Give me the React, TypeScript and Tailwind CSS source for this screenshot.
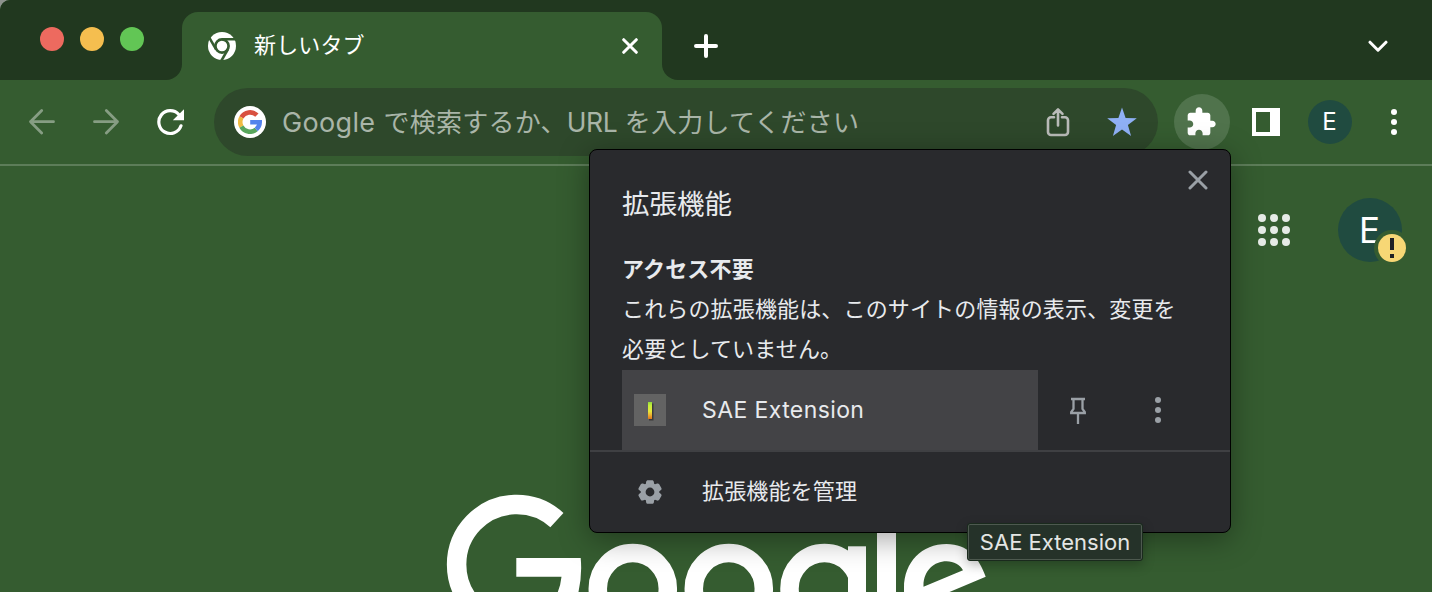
import React from 'react';

const FONT = "font-['Inter','Noto_Sans_CJK_JP',sans-serif]";

function ChromeMark() {
  return (
    <svg className="h-7 w-7 shrink-0" viewBox="0 0 28 28">
      <circle cx="14" cy="14" r="14" fill="#fff" />
      <circle cx="14" cy="14" r="6.6" fill="none" stroke="#355c30" strokeWidth="2.7" />
      <g stroke="#355c30" strokeWidth="2.6">
        <path d="M14 7.2H28" />
        <path d="M14 7.2H28" transform="rotate(120 14 14)" />
        <path d="M14 7.2H28" transform="rotate(240 14 14)" />
      </g>
    </svg>
  );
}

function GoogleMark() {
  return (
    <span className="flex h-8 w-8 shrink-0 items-center justify-center rounded-full bg-white">
      <svg className="h-6 w-6" viewBox="0 0 24 24" fill="none" strokeWidth="4.6">
        <path d="M18.9 5.2A9.8 9.8 0 0 0 3.4 7.4" stroke="#d95140" />
        <path d="M3.4 7.4a9.8 9.8 0 0 0 0 9.2" stroke="#f0bb42" />
        <path d="M3.4 16.6A9.8 9.8 0 0 0 18.2 19.5" stroke="#58a55c" />
        <path d="M12.2 12.2H21.7A9.8 9.8 0 0 1 18.2 19.5" stroke="#5383ec" />
      </svg>
    </span>
  );
}

function Dots({ className }: { className: string }) {
  return (
    <svg className={className} viewBox="0 0 6 26" fill="currentColor">
      <circle cx="3" cy="3" r="3" />
      <circle cx="3" cy="13" r="3" />
      <circle cx="3" cy="23" r="3" />
    </svg>
  );
}

function TabStrip() {
  return (
    <div className="flex h-20 bg-[#21381f]">
      <div className="w-[166px] pt-[27px] pl-10">
        <div className="flex gap-4">
          <span className="h-6 w-6 rounded-full bg-[#ed6a5f]" />
          <span className="h-6 w-6 rounded-full bg-[#f5be4f]" />
          <span className="h-6 w-6 rounded-full bg-[#62c655]" />
        </div>
      </div>
      <div className="flex flex-1 bg-[linear-gradient(#355c30,#355c30)] bg-[length:512px_16px] bg-[position:0_100%] bg-no-repeat">
        <div className="w-4 rounded-br-2xl bg-[#21381f]" />
        <div className="mt-3 flex h-[68px] w-[480px] items-center rounded-t-2xl bg-[#355c30] pl-[26px]">
          <ChromeMark />
          <span className="mb-0.5 ml-[18px] flex-1 text-[22px] leading-8 tracking-[0.15px] text-white">新しいタブ</span>
          <svg className="mr-6 h-4 w-4" viewBox="0 0 16 16" stroke="#fff" strokeWidth="3" strokeLinecap="round">
            <path d="M1.7 1.7 14.3 14.3M14.3 1.7 1.7 14.3" />
          </svg>
        </div>
        <div className="flex flex-1 items-start justify-between rounded-bl-2xl bg-[#21381f] pt-[34px] pr-[44px] pl-8">
          <svg className="h-6 w-6" viewBox="0 0 24 24" stroke="#fff" strokeWidth="4" strokeLinecap="round">
            <path d="M12 2v20M2 12h20" />
          </svg>
          <svg className="mt-[6px] h-3 w-5" viewBox="0 0 20 12" fill="none" stroke="#fff" strokeWidth="3" strokeLinecap="round" strokeLinejoin="round">
            <path d="M2 2.2 10 10.2 18 2.2" />
          </svg>
        </div>
      </div>
    </div>
  );
}

function Toolbar() {
  return (
    <div className="flex h-[86px] items-start border-b-2 border-[#5d7d59] bg-[#355c30]">
      <div className="flex h-[84px] w-[214px] items-center pl-7">
        <svg className="h-7 w-7" viewBox="0 0 28 28" fill="none" stroke="#869d83" strokeWidth="2.8" strokeLinecap="round" strokeLinejoin="round">
          <path d="M25.5 13.7H2.5M13.7 2.5 2.5 13.7 13.7 25" />
        </svg>
        <svg className="ml-9 h-7 w-7" viewBox="0 0 28 28" fill="none" stroke="#869d83" strokeWidth="2.8" strokeLinecap="round" strokeLinejoin="round">
          <path d="M2.5 13.7h23M14.3 2.5 25.5 13.7 14.3 25" />
        </svg>
        <svg className="ml-9 h-7 w-7" viewBox="0 0 28 28" fill="none">
          <path d="M25 17.8A11.4 11.4 0 1 1 22.8 6.5" stroke="#fff" strokeWidth="3.2" strokeLinecap="round" />
          <path d="M28 1.2V12.3H16.8z" fill="#fff" />
        </svg>
      </div>
      <div className="mt-2 flex h-[68px] w-[944px] items-center rounded-full bg-[#2e482b] pl-5">
        <GoogleMark />
        <div className="mt-px ml-4 flex-1 text-[26px] leading-9 tracking-[0.25px] whitespace-pre text-[#a9b5a8]">
          <span className="text-[27px] tracking-[0.35px]">Google </span>で検索するか、
          <span className="text-[26.5px] tracking-[-0.3px]">URL </span>を入力してください
        </div>
        <svg className="h-[30px] w-6" viewBox="0 0 24 30" fill="none" stroke="#b9bbb8" strokeWidth="2.6" strokeLinecap="round" strokeLinejoin="round">
          <path d="M8 10.3H5a3 3 0 0 0-3 3V25a3 3 0 0 0 3 3h14a3 3 0 0 0 3-3V13.3a3 3 0 0 0-3-3h-3M12 18.5V2.5M7.5 6.8 12 2.3l4.5 4.5" />
        </svg>
        <svg className="mr-[21px] ml-[37px] h-[30px] w-[30px]" viewBox="0 0 30 30" fill="#8fb0f5">
          <path d="M15 .5l3.6 10.6 11.2.2-8.9 6.8 3.2 10.8L15 22.5l-9.1 6.4 3.2-10.8L.2 11.3l11.2-.2z" />
        </svg>
      </div>
      <span className="mt-[14px] ml-4 flex h-14 w-14 items-center justify-center rounded-full bg-[#50734c]">
        <svg className="mr-0.5 h-8 w-8" viewBox="0 0 24 24" fill="#fff">
          <path d="M20.5 11H19V7c0-1.1-.9-2-2-2h-4V3.5C13 2.12 11.88 1 10.5 1S8 2.12 8 3.5V5H4c-1.1 0-1.99.9-1.99 2v3.8H3.5c1.49 0 2.7 1.21 2.7 2.7s-1.21 2.7-2.7 2.7H2V20c0 1.1.9 2 2 2h3.8v-1.5c0-1.49 1.21-2.7 2.7-2.7s2.7 1.21 2.7 2.7V22H17c1.1 0 2-.9 2-2v-4h1.5c1.38 0 2.5-1.12 2.5-2.5S21.88 11 20.5 11z" />
        </svg>
      </span>
      <span className="mt-7 ml-[22px] h-7 w-7 border-y-4 border-r-[10px] border-l-4 border-white" />
      <span className="mt-5 ml-7 flex h-11 w-11 items-center justify-center rounded-full bg-[#204b40] pr-px text-[24px] text-white">E</span>
      <Dots className="mt-[29px] ml-[39px] h-[26px] w-1.5 text-white" />
    </div>
  );
}

function GoogleLogo() {
  return (
    <svg className="absolute top-[324px] left-[440px] h-[102px] w-[560px]" viewBox="440 490 560 102" fill="#fff">
      <path d="M556.9 520.1A60 60 0 1 0 556.9 609" fill="none" stroke="#fff" strokeWidth="19.5" />
      <path d="M516.3 558H580.7Q582.5 577 577.5 596H556Q560.5 587 561.5 576.7H516.3Z" />
      <g fill="none" stroke="#fff" strokeWidth="18.5">
        <ellipse cx="632.8" cy="588.5" rx="35" ry="35.5" />
        <ellipse cx="728.8" cy="588.5" rx="35" ry="35.5" />
        <ellipse cx="824.5" cy="588.5" rx="35" ry="35.5" />
      </g>
      <rect x="848" y="546.3" width="18" height="50" />
      <rect x="866" y="540" width="11" height="56" fill="#355c30" />
      <rect x="877" y="490" width="19" height="110" />
      <path
        fillRule="evenodd"
        d="M904 596V588C904 562 922 544 946.5 544C968 544 979 558 985.7 576.7L940 596ZM923.5 586.7C923 571 934 561.3 946.5 561.3C954 561.3 960 565 963 570.3Z"
      />
    </svg>
  );
}

function NewTabPage() {
  return (
    <div className="relative flex flex-1 justify-end gap-12 overflow-hidden bg-[#355c30] pt-8 pr-[30px]">
      <GoogleLogo />
      <div className="mt-4 grid h-8 w-8 grid-cols-3 gap-1">
        {Array.from({ length: 9 }, (_, i) => (
          <span key={i} className="h-2 w-2 rounded-full bg-[#e6ebe6]" />
        ))}
      </div>
      <div className="relative flex h-16 w-16 items-center justify-center rounded-full bg-[#204b40]">
        <span className="mt-px mr-px text-[35px] leading-none text-white">E</span>
        <span className="absolute top-8 left-9 flex h-9 w-9 items-center justify-center rounded-full bg-[#355c30]">
          <svg className="h-7 w-7" viewBox="0 0 28 28">
            <circle cx="14" cy="14" r="14" fill="#f7d775" />
            <path d="M12 4h4v12h-4zM12 20h4v4h-4z" fill="#202124" />
          </svg>
        </span>
      </div>
    </div>
  );
}

function ExtensionsPopup() {
  return (
    <div className="absolute top-[149px] left-[589px] flex h-[384px] w-[642px] flex-col rounded-lg border border-black bg-[#292a2d] text-[22px] text-[#e8eaed] shadow-[0_6px_30px_rgba(0,0,0,0.36)]">
      <div className="flex h-[94px] justify-between pl-8">
        <h1 className="mt-[34px] text-[27.5px] leading-10 font-normal">拡張機能</h1>
        <svg className="mt-5 mr-[22px] h-5 w-5" viewBox="0 0 20 20" stroke="#9aa0a6" strokeWidth="3" strokeLinecap="round">
          <path d="M2 2 18 18M18 2 2 18" />
        </svg>
      </div>
      <div className="mt-[5px] mb-px h-[120px] pl-8 leading-10 tracking-[0.15px]">
        <h2 className="font-bold">アクセス不要</h2>
        <p className="w-[580px]">これらの拡張機能は、このサイトの情報の表示、変更を<br />必要としていません。</p>
      </div>
      <div className="flex h-20 items-center pl-8">
        <div className="flex h-20 w-[416px] items-center bg-[#434346] pl-3">
          <svg className="h-8 w-8" viewBox="0 0 32 32">
            <defs>
              <linearGradient id="bar" x1="0" y1="0" x2="0" y2="1">
                <stop offset="0" stopColor="#8fdb3a" />
                <stop offset="0.2" stopColor="#c4ee3c" />
                <stop offset="0.55" stopColor="#e6e83c" />
                <stop offset="0.75" stopColor="#efb52f" />
                <stop offset="1" stopColor="#d9731f" />
              </linearGradient>
            </defs>
            <path d="M0 0h32v32H0z" fill="#636363" />
            <path d="M15 9.5h4.5v17H15z" fill="#3a3a3a" />
            <path d="M14 8h4v17h-4z" fill="url(#bar)" />
          </svg>
          <span className="ml-9 text-[23px] tracking-[0.4px]">SAE Extension</span>
        </div>
        <svg className="ml-8 h-7 w-4" viewBox="0 0 16 28" fill="none" stroke="#9aa0a6" strokeWidth="2.3">
          <path d="M1 3H15M3.5 3V13L1.2 16.2V17H14.8V16.2L12.5 13V3M8 17V28" />
        </svg>
        <Dots className="ml-[69px] h-[26px] w-1.5 text-[#9aa0a6]" />
      </div>
      <div className="flex flex-1 items-center border-t-2 border-[#3f4043] pl-[44px]">
        <svg className="h-8 w-8" viewBox="0 0 24 24" fill="#9aa0a6">
          <path
            fillRule="evenodd"
            d="M13.85 22.25h-3.7c-.74 0-1.36-.54-1.45-1.27l-.27-1.89c-.27-.14-.53-.29-.79-.46l-1.8.72c-.7.26-1.47-.03-1.81-.65L2.2 15.53c-.35-.66-.2-1.44.36-1.88l1.53-1.19c-.01-.15-.02-.3-.02-.46 0-.15.01-.31.02-.46l-1.52-1.19c-.59-.45-.74-1.26-.37-1.88l1.85-3.19c.34-.62 1.11-.9 1.79-.63l1.81.73c.26-.17.52-.32.78-.46l.27-1.91c.09-.7.71-1.25 1.44-1.25h3.7c.74 0 1.36.54 1.45 1.27l.27 1.89c.27.14.53.29.79.46l1.8-.72c.71-.26 1.48.03 1.82.65l1.84 3.18c.36.66.2 1.44-.36 1.88l-1.52 1.19c.01.15.02.3.02.46s-.01.31-.02.46l1.52 1.19c.56.45.72 1.23.37 1.86l-1.86 3.22c-.34.62-1.11.9-1.8.63l-1.8-.72c-.26.17-.52.32-.78.46l-.27 1.91c-.1.68-.72 1.22-1.46 1.22zM12 8.2a3.8 3.8 0 1 0 0 7.6a3.8 3.8 0 1 0 0-7.6z"
            transform="translate(1.6 1.6) scale(.867)"
          />
        </svg>
        <span className="mb-0.5 ml-9 tracking-[0.15px]">拡張機能を管理</span>
      </div>
    </div>
  );
}

export default function App() {
  return (
    <div className="h-[592px] w-[1432px] bg-[#8d928d]">
      <div className={`${FONT} relative flex h-full flex-col overflow-hidden rounded-tl-[10px] bg-[#355c30]`}>
        <TabStrip />
        <Toolbar />
        <NewTabPage />
        <ExtensionsPopup />
        <div className="absolute top-[523px] left-[967px] flex h-[38px] w-[176px] items-center justify-center rounded-[3px] border border-[#1a2a1d] bg-[#253229] text-[22px] text-[#e4e6e4] shadow-[inset_0_0_0_1px_#4d594f,0_4px_12px_rgba(0,0,0,0.25)]">
          SAE Extension
        </div>
      </div>
    </div>
  );
}
